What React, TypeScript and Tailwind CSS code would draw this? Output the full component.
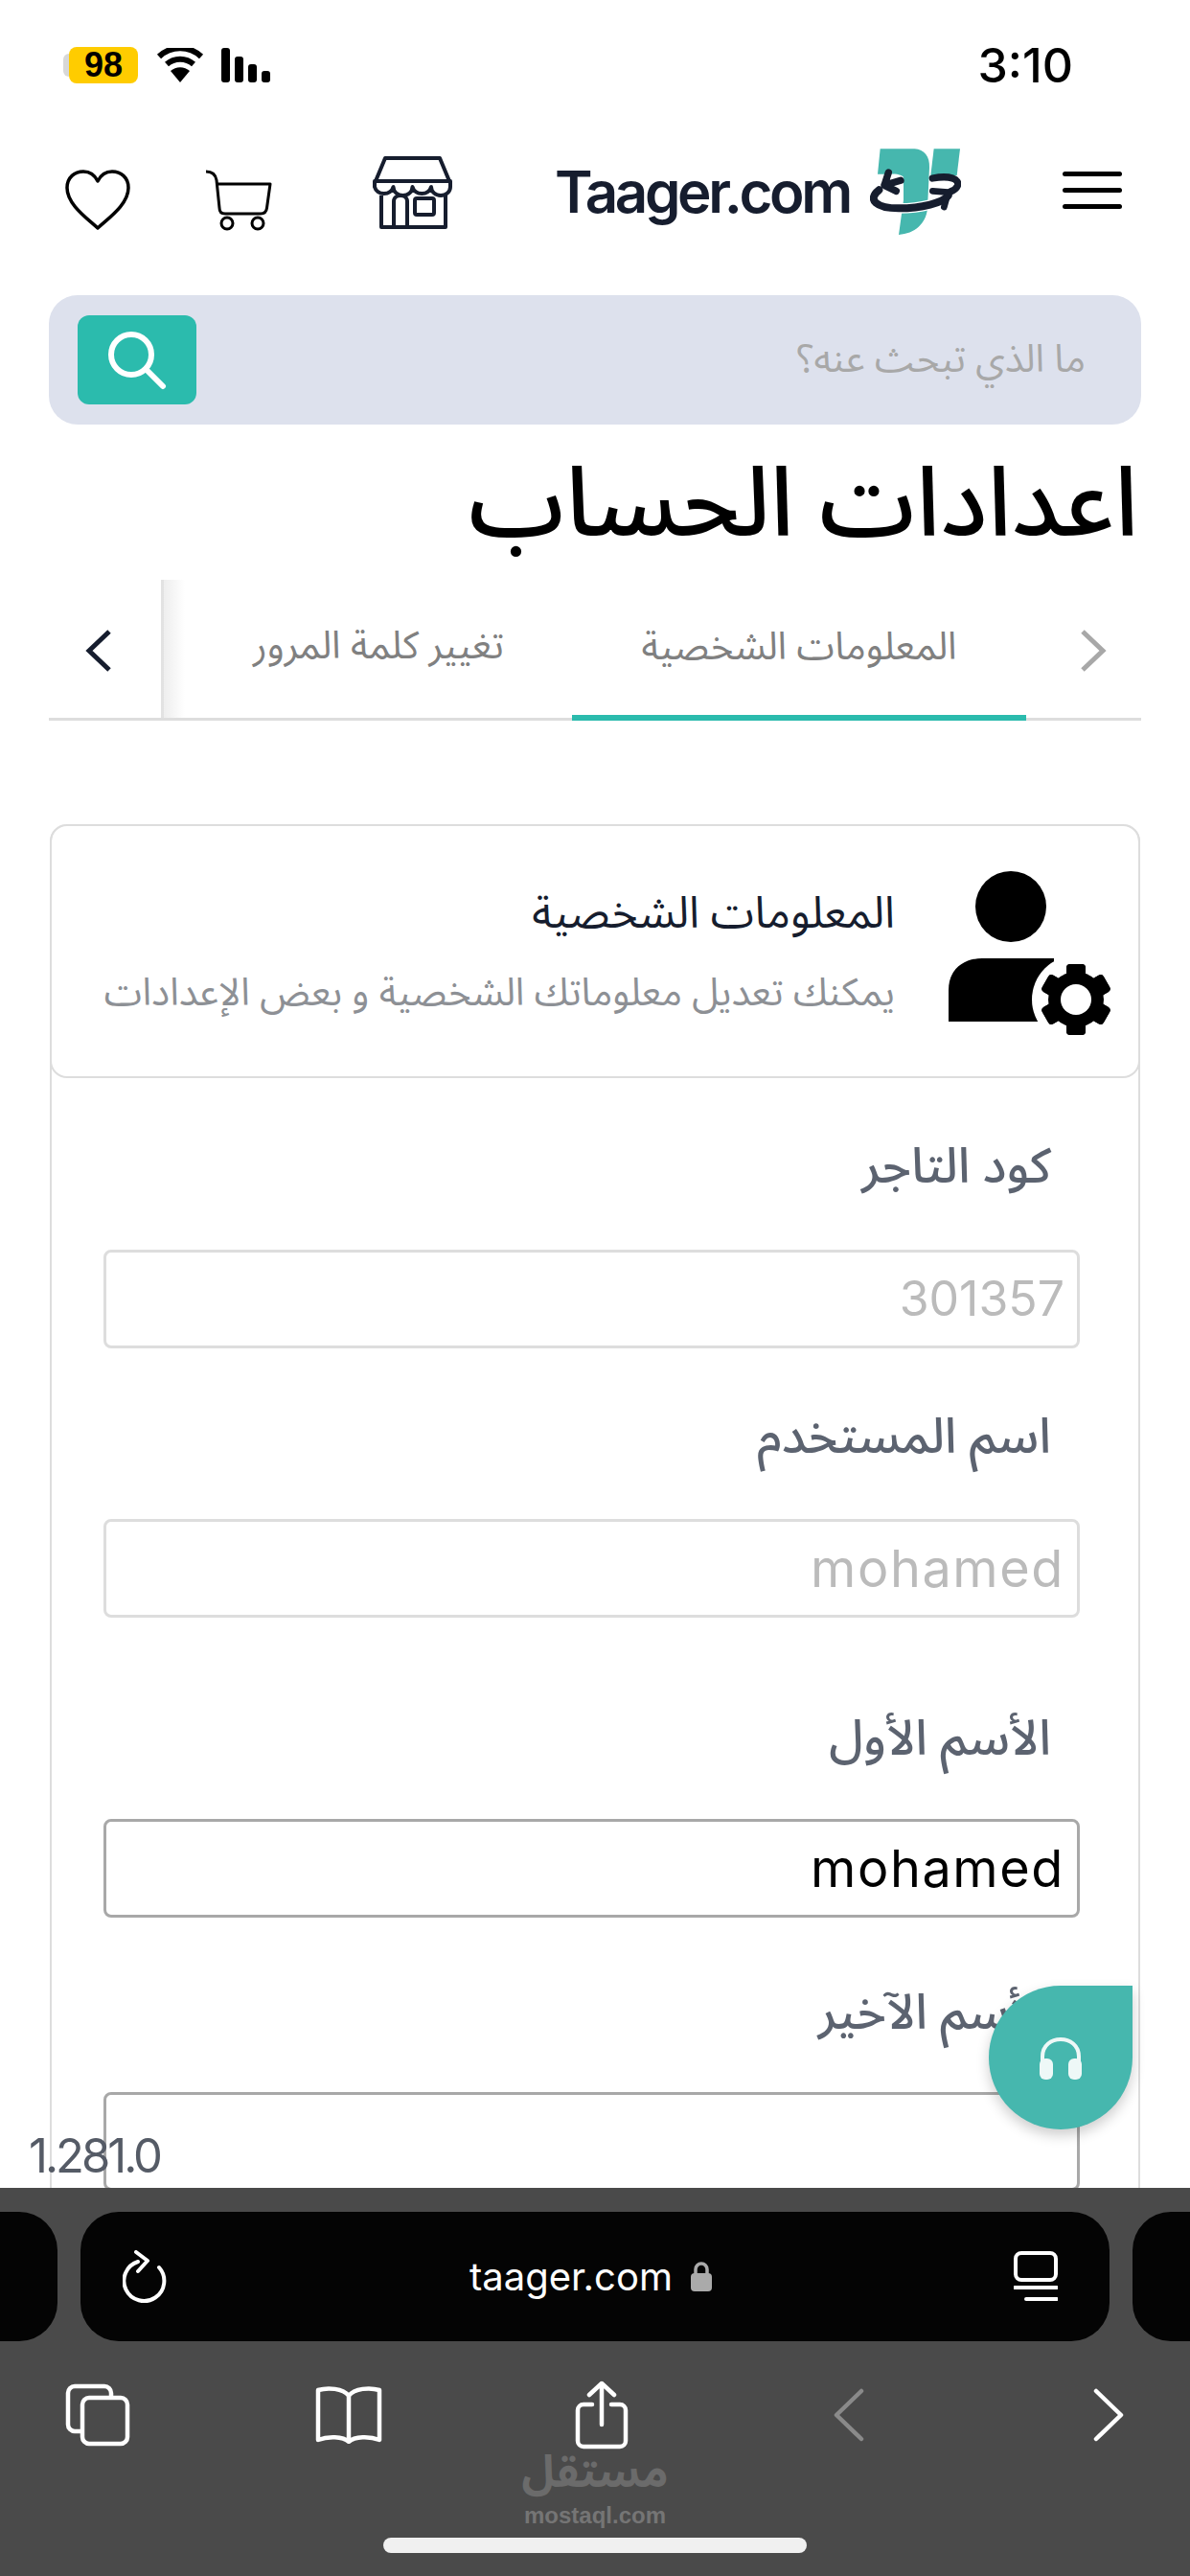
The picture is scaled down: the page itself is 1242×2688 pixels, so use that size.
import React from "react";

const ar = "font-['Noto_Sans_Arabic','Noto_Sans','DejaVu_Sans',sans-serif]";

function Heart() {
  return (
    <svg width="68" height="64" viewBox="0 0 68 64" fill="none" stroke="#000" strokeWidth="3.5" strokeLinejoin="round">
      <path d="M34 61 C22 50 2 36 2 19 C2 8 10 2 19 2 C26 2 31 6 34 12 C37 6 42 2 49 2 C58 2 66 8 66 19 C66 36 46 50 34 61 Z" />
    </svg>
  );
}

function Cart() {
  return (
    <svg width="70" height="64" viewBox="0 0 70 64" fill="none" stroke="#000" strokeWidth="3">
      <path d="M1 2 C8 2 11 5 12 11 L15 40 C15 44 17 46 21 46 L58 46 C62 46 64 44 64.500 40 L68 15 L13 15" strokeLinejoin="round" />
      <circle cx="23" cy="56" r="6" />
      <circle cx="55" cy="56" r="6" />
    </svg>
  );
}

function Shop() {
  return (
    <svg width="83" height="76" viewBox="0 0 83 76" fill="none" stroke="#161d2e" strokeWidth="4" strokeLinejoin="round">
      <path d="M13 2 H70 L80 26 H3 Z" />
      <path d="M2 26 H81 V32 A10 9 0 0 1 61 32 A10 9 0 0 1 41.500 32 A10 9 0 0 1 21.500 32 A10 9 0 0 1 2 32 Z" />
      <path d="M9 41 V74 H76 V41" />
      <path d="M22 74 V47 C22 39 36 39 36 47 V74" />
      <rect x="44" y="44" width="20" height="17" rx="2" />
    </svg>
  );
}

function LogoMark() {
  return (
    <svg width="95" height="92" viewBox="1100 72 285 276" fill="none">
      <path d="M1132 76 H1240 C1270 78 1288 100 1286 135 L1280 262 C1276 310 1240 342 1190 345 L1205 236 L1205 165 C1195 150 1160 155 1124 155 Z" fill="#46b7ae" />
      <path d="M1300 76 H1382 L1372 160 H1290 Z" fill="#46b7ae" />
      <path d="M1128 205 C1095 232 1120 262 1190 262 C1260 262 1330 245 1340 222" stroke="#fff" strokeWidth="32" />
      <path d="M1128 205 C1090 235 1120 262 1190 262 C1260 262 1330 245 1345 222" stroke="#161d2e" strokeWidth="24" strokeLinecap="round" />
      <path d="M1296 168 C1350 158 1382 170 1374 192 C1370 202 1362 206 1352 210" stroke="#161d2e" strokeWidth="22" strokeLinecap="round" />
      <path d="M1296 208 L1345 212 L1332 258" stroke="#161d2e" strokeWidth="20" strokeLinecap="round" strokeLinejoin="round" />
      <path d="M1196 175 L1145 190 L1182 208 M1145 190 L1158 150" stroke="#161d2e" strokeWidth="22" strokeLinecap="round" strokeLinejoin="round" />
    </svg>
  );
}

function UserGear() {
  const teeth = [0, 60, 120, 180, 240, 300];
  return (
    <svg width="240" height="220" viewBox="0 0 240 220" className="shrink-0">
      <circle cx="115" cy="63" r="37" fill="#000" />
      <path d="M50 183 V150 C50 128 66 117 85 117 H160 L160 183 Z" fill="#000" />
      <circle cx="183" cy="160" r="46" fill="#fff" />
      <g fill="#000">
        {teeth.map((a) => (
          <rect key={a} x="173" y="123" width="20" height="74" rx="4" transform={`rotate(${a} 183 160)`} />
        ))}
        <circle cx="183" cy="160" r="29" />
      </g>
      <circle cx="183" cy="160" r="16" fill="#fff" />
    </svg>
  );
}

function Field({ label, value, muted, dark, labelClass, valueClass }: { label: string; value?: string; muted?: boolean; dark?: boolean; labelClass: string; valueClass?: string }) {
  return (
    <div>
      <div dir="rtl" className={`h-[60px] pr-[30px] flex items-center text-[51px] font-medium text-[#5c6370] ${ar} ${labelClass}`}>{label}</div>
      <div className={`h-[103px] rounded-[8px] border-[3px] bg-white flex items-center justify-end pr-[13px] font-['Inter',sans-serif] ${dark ? "border-[#a8a8a8]" : "border-[#dddddd]"} ${muted ? "text-[#bbbbbb]" : "text-black"}`}>
        <span className={valueClass}>{value}</span>
      </div>
    </div>
  );
}

export default function App() {
  return (
    <div className="relative w-[1242px] h-[2688px] overflow-hidden bg-white flex flex-col">
      <main className="flex-1 min-h-0 overflow-hidden">
        {/* status bar */}
        <div className="h-[40px] mt-[48px] pl-[66px] pr-[122px] flex items-center">
          <div className="w-[6px] h-[24px] bg-[#d8d8d8] rounded-l-full" />
          <div className="w-[72px] h-[38px] rounded-[8px] bg-[#ffcc00] flex items-center justify-center text-[36px] font-bold text-black font-['Liberation_Sans',sans-serif]">98</div>
          <svg width="50" height="36" viewBox="0 0 50 36" fill="none" className="ml-[19px]">
            <path d="M25 36 L15 24 A15 15 0 0 1 35 24 Z" fill="#000" />
            <path d="M11 17 A21 21 0 0 1 39 17" stroke="#000" strokeWidth="6" />
            <path d="M3 9 A32 32 0 0 1 47 9" stroke="#000" strokeWidth="6" />
          </svg>
          <div className="ml-[18px] flex items-end gap-[5px] h-[36px]">
            <div className="w-[9px] h-[36px] rounded-[3px] bg-black" />
            <div className="w-[9px] h-[27px] rounded-[3px] bg-black" />
            <div className="w-[9px] h-[19px] rounded-[3px] bg-black" />
            <div className="w-[9px] h-[12px] rounded-[3px] bg-black" />
          </div>
          <div className="ml-auto text-[50px] leading-none font-medium text-black font-['Inter',sans-serif]">3:10</div>
        </div>

        {/* header */}
        <div className="mt-[67px] h-[90px] pl-[68px] flex items-center">
          <div className="mt-[18px]"><Heart /></div>
          <div className="ml-[78px] mt-[18px]"><Cart /></div>
          <div className="ml-[105px] mt-[2px]"><Shop /></div>
          <div className="ml-[107px] w-[424px] flex items-center justify-between">
            <span className="text-[60px] leading-none font-semibold tracking-[-3.4px] text-[#161d2e] font-['Inter',sans-serif]">Taager.com</span>
            <LogoMark />
          </div>
          <div className="ml-[106px] w-[62px] flex flex-col gap-[12px] -mt-[4px]">
            <div className="h-[5px] bg-black rounded-full" />
            <div className="h-[5px] bg-black rounded-full" />
            <div className="h-[5px] bg-black rounded-full" />
          </div>
        </div>

        {/* search */}
        <div className="mx-[51px] mt-[63px] h-[135px] rounded-[30px] bg-[#dde1ed] flex items-center pl-[30px] pr-[58px] justify-between">
          <div className="w-[124px] h-[93px] rounded-[12px] bg-[#2bbbad] flex items-center justify-center">
            <svg width="62" height="62" viewBox="0 0 62 62" fill="none" stroke="#fff" strokeWidth="6" strokeLinecap="round">
              <circle cx="25" cy="25" r="21" />
              <path d="M41 41 L58 58" />
            </svg>
          </div>
          <div dir="rtl" className={`text-[40px] text-[#a8a8a8] ${ar}`}>ما الذي تبحث عنه؟</div>
        </div>

        {/* title */}
        <div dir="rtl" className={`mx-[54px] mt-[25px] h-[120px] flex items-center text-[101px] font-medium text-black ${ar}`}>اعدادات الحساب</div>

        {/* tabs */}
        <div className="mx-[51px] mt-[17px] h-[147px] border-b-[3px] border-[#dddddd] flex">
          <div className="w-[120px] flex items-center justify-center pr-[14px] border-r-[3px] border-[#e2e2e2] pt-[4px]">
            <svg width="28" height="44" viewBox="0 0 28 44" fill="none" stroke="#161d2e" strokeWidth="5"><path d="M25 2 L4 22 L25 42" /></svg>
          </div>
          <div className="w-[22px] bg-gradient-to-r from-[#eeeeee] to-white" />
          <div className="w-[404px] flex items-center justify-center pb-[4px]">
            <span dir="rtl" className={`text-[40px] text-[#808080] ${ar}`}>تغيير كلمة المرور</span>
          </div>
          <div className="w-[474px] -mb-[3px] border-b-[6px] border-[#2bbbad] flex items-center justify-center">
            <span dir="rtl" className={`text-[40px] text-[#808080] ${ar}`}>المعلومات الشخصية</span>
          </div>
          <div className="flex-1 flex items-center justify-center pt-[4px] pl-[20px]">
            <svg width="28" height="44" viewBox="0 0 28 44" fill="none" stroke="#a8a8a8" strokeWidth="5"><path d="M3 2 L24 22 L3 42" /></svg>
          </div>
        </div>

        {/* card */}
        <div className="mx-[52px] mt-[108px] border-x-2 border-[#dddddd] rounded-t-[18px]">
          <div className="h-[265px] border-y-2 border-[#dddddd] rounded-[18px] -mx-[2px] border-x-2 flex items-center justify-end pr-[8px]">
            <div dir="rtl" className={`flex flex-col mr-[6px] ${ar}`}>
              <div className="text-[46px] leading-[60px] text-[#161d2e]">المعلومات الشخصية</div>
              <div className="mt-[28px] text-[40px] leading-[50px] text-[#8d9095]">يمكنك تعديل معلوماتك الشخصية و بعض الإعدادات</div>
            </div>
            <UserGear />
          </div>
          <div className="pl-[54px] pr-[61px] pt-[63px]">
            <Field label="كود التاجر" value="301357" muted labelClass="mb-[56px]" valueClass="text-[50px]" />
            <div className="mt-[63px]"><Field label="اسم المستخدم" value="mohamed" muted labelClass="mb-[55px]" valueClass="text-[54px] tracking-[1.6px]" /></div>
            <div className="mt-[97px]"><Field label="الأسم الأول" value="mohamed" dark labelClass="mb-[53px]" valueClass="text-[54px] tracking-[1.6px]" /></div>
            <div className="mt-[70px]"><Field label="الأسم الآخير" dark labelClass="mb-[52px]" /></div>
          </div>
        </div>
      </main>

      {/* version + help */}
      <div className="absolute left-[30px] top-[2222px] text-[49px] leading-[56px] tracking-[-3px] text-[#555b66] font-['Inter',sans-serif]">1.281.0</div>
      <div className="absolute left-[1032px] top-[2072px] w-[150px] h-[150px] rounded-full rounded-tr-[18px] bg-[#46b7ae] shadow-[0_6px_14px_rgba(0,0,0,0.2)] flex items-center justify-center">
        <svg width="48" height="46" viewBox="0 0 48 46" fill="none">
          <path d="M5 30 V22 C5 -2 43 -2 43 22 V30" stroke="#eef8f7" strokeWidth="4" />
          <rect x="2" y="24" width="14" height="22" rx="6" fill="#eef8f7" />
          <rect x="32" y="24" width="14" height="22" rx="6" fill="#eef8f7" />
        </svg>
      </div>

      {/* safari bar */}
      <div className="relative h-[405px] shrink-0 bg-[#4a4a4a]">
        <div className="pt-[25px] flex gap-[24px] h-[160px]">
          <div className="w-[60px] h-[135px] rounded-r-[40px] bg-[#040404]" />
          <div className="flex-1 h-[135px] rounded-[40px] bg-[#040404] flex items-center pl-[44px] pr-[54px]">
            <svg width="46" height="56" viewBox="0 0 46 56" fill="none" stroke="#fff" strokeWidth="4" strokeLinecap="round" strokeLinejoin="round">
              <path d="M16 12 A21 21 0 1 0 38 18" />
              <path d="M14 2 L26 11 L16 22" />
            </svg>
            <div className="flex-1 flex items-center justify-center gap-[18px] pl-[2px]">
              <span className="text-[40px] leading-none text-white font-['Inter',sans-serif]">taager.com</span>
              <svg width="24" height="33" viewBox="0 0 24 33" fill="none">
                <path d="M6 14 V9 A6 6 0 0 1 18 9 V14" stroke="#aaaaaa" strokeWidth="3.500" />
                <rect x="1" y="13" width="22" height="19" rx="4" fill="#aaaaaa" />
              </svg>
            </div>
            <svg width="46" height="54" viewBox="0 0 46 54" fill="none" stroke="#fff" strokeWidth="4" strokeLinecap="round">
              <rect x="2" y="2" width="42" height="28" rx="6" />
              <path d="M1 38 H45 M13 50 H45" />
            </svg>
          </div>
          <div className="w-[60px] h-[135px] rounded-l-[40px] bg-[#040404]" />
        </div>
        <div className="mt-[41px] h-[72px] pl-[68px] flex items-center">
          <svg width="68" height="66" viewBox="0 0 68 66" fill="none" stroke="#fff" strokeWidth="4.500">
            <path d="M17 50 H10 A7 7 0 0 1 3 43 V10 A7 7 0 0 1 10 3 H41 A7 7 0 0 1 48 10 V15" />
            <rect x="18" y="15" width="47" height="48" rx="7" />
          </svg>
          <svg width="72" height="60" viewBox="0 0 72 60" fill="none" stroke="#fff" strokeWidth="4.500" strokeLinejoin="round" className="ml-[192px]">
            <path d="M36 10 C30 2 14 1 4 4 V56 C14 52 30 52 36 58 C42 52 58 52 68 56 V4 C58 1 42 2 36 10 Z M36 10 V58" />
          </svg>
          <svg width="56" height="72" viewBox="0 0 56 72" fill="none" stroke="#fff" strokeWidth="4.500" strokeLinecap="round" strokeLinejoin="round" className="ml-[200px]">
            <path d="M18 25 H9 A6 6 0 0 0 3 31 V63 A6 6 0 0 0 9 69 H47 A6 6 0 0 0 53 63 V31 A6 6 0 0 0 47 25 H38" />
            <path d="M28 46 V3 M15 15 L28 3 L41 15" />
          </svg>
          <svg width="32" height="56" viewBox="0 0 32 56" fill="none" stroke="#8a8a8a" strokeWidth="4.500" strokeLinecap="round" strokeLinejoin="round" className="ml-[214px]">
            <path d="M29 3 L3 28 L29 53" />
          </svg>
          <svg width="32" height="56" viewBox="0 0 32 56" fill="none" stroke="#fff" strokeWidth="4.500" strokeLinecap="round" strokeLinejoin="round" className="ml-[239px]">
            <path d="M3 3 L29 28 L3 53" />
          </svg>
        </div>
        <div className="mt-[4px] flex flex-col items-center">
          <div dir="rtl" className={`text-[46px] leading-[42px] font-bold text-[#6b6b6b] ${ar}`}>مستقل</div>
          <div className="mt-[10px] text-[24px] leading-[26px] font-bold text-[#757575] font-['Liberation_Sans',sans-serif]">mostaql.com</div>
        </div>
        <div className="absolute left-[400px] top-[365px] w-[442px] h-[16px] rounded-full bg-[#f0f0f0]" />
      </div>
    </div>
  );
}
